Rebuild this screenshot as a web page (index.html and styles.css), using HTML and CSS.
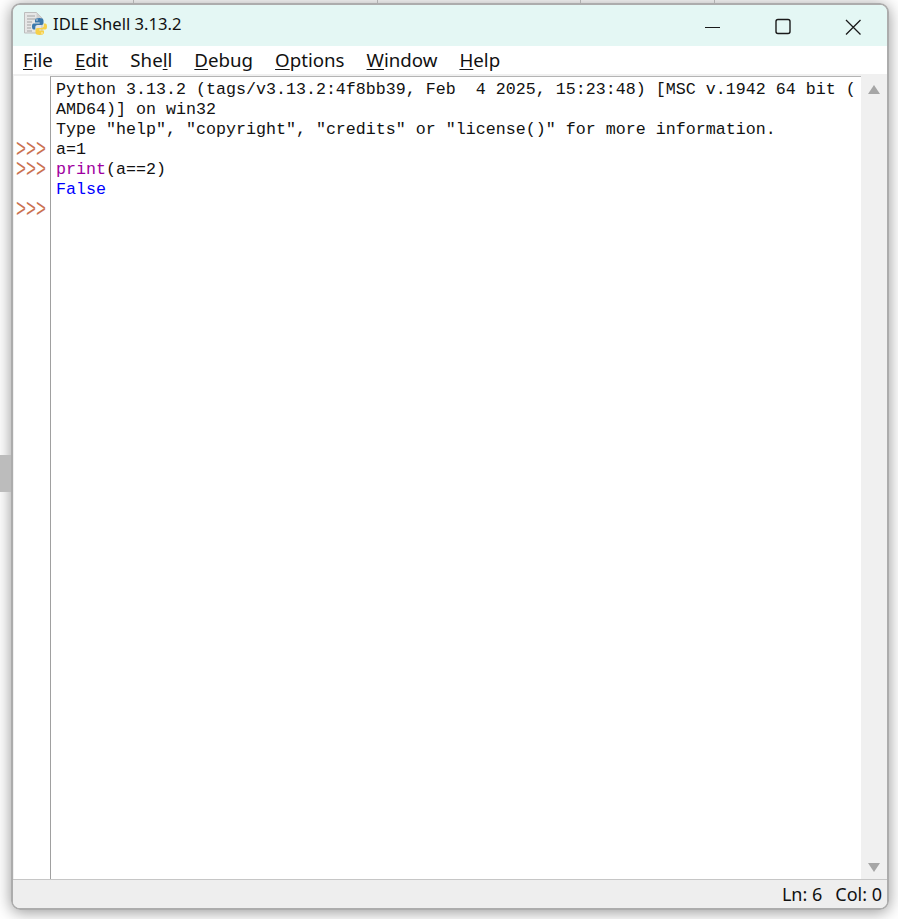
FILE: index.html
```html
<!DOCTYPE html>
<html lang="en">
<head>
<meta charset="utf-8">
<title>IDLE Shell 3.13.2</title>
<link rel="stylesheet" href="styles.css">
</head>
<body>
<div class="backdrop-block"></div>
<div class="backdrop-tick tick-a"></div>
<div class="backdrop-tick tick-b"></div>
<div class="backdrop-tick tick-c"></div>
<div class="backdrop-tick tick-d"></div>
<div class="window">
  <header class="titlebar">
    <svg class="app-icon" width="24" height="24" viewBox="0 0 24 24">
      <path d="M.5.500h12l5.500 5.500v15H.500z" fill="#e6e6e6" stroke="#bdbdbd"/>
      <path d="M3 4h8M3 7h9M3 10h5M3 13h4M3 16h4M3 19h5" stroke="#a4a4a4" stroke-width="1"/>
      <path d="M12.500.500l5.500 5.500h-5.500z" fill="#cfcfcf"/>
      <g>
        <path d="M15.500 6c-3 0-4.500.8-4.500 2.500v2h4.700v1H9.800C8.500 11.500 8 12.800 8 14.500s.6 3 1.800 3h1.500v-2.200c0-1.300 1-2.200 2.200-2.200h4c1.200 0 2-.9 2-2V8.500C19.500 6.800 18 6 15.500 6z" fill="#3b78ab"/>
        <circle cx="13" cy="8" r=".8" fill="#dbe8f2"/>
      </g>
      <g transform="rotate(180 15.500 14.500)">
        <path d="M15.500 6c-3 0-4.500.8-4.500 2.500v2h4.700v1H9.800C8.500 11.500 8 12.800 8 14.500s.6 3 1.800 3h1.500v-2.200c0-1.300 1-2.200 2.200-2.200h4c1.200 0 2-.9 2-2V8.500C19.500 6.800 18 6 15.500 6z" fill="#f6d04a"/>
        <circle cx="13" cy="8" r=".8" fill="#fff6d0"/>
      </g>
    </svg>
    <span class="title">IDLE Shell 3.13.2</span>
    <div class="controls">
      <svg class="control" width="70" height="41" viewBox="0 0 70 41"><path d="M27 23.500h15" stroke="#1a1a1a" stroke-width="1.200"/></svg>
      <svg class="control" width="70" height="41" viewBox="0 0 70 41"><rect x="28" y="15.500" width="14" height="14" rx="2" fill="none" stroke="#1a1a1a" stroke-width="1.400"/></svg>
      <svg class="control" width="70" height="41" viewBox="0 0 70 41"><path d="M28 16l14.500 14.500M42.500 16L28 30.500" stroke="#1a1a1a" stroke-width="1.300"/></svg>
    </div>
  </header>
  <nav class="menubar">
    <span class="menu-item"><u>F</u>ile</span>
    <span class="menu-item"><u>E</u>dit</span>
    <span class="menu-item">She<u>l</u>l</span>
    <span class="menu-item"><u>D</u>ebug</span>
    <span class="menu-item"><u>O</u>ptions</span>
    <span class="menu-item"><u>W</u>indow</span>
    <span class="menu-item"><u>H</u>elp</span>
  </nav>
  <main class="editor">
    <div class="gutter">
      <div class="line">&nbsp;</div>
      <div class="line">&nbsp;</div>
      <div class="line">&nbsp;</div>
      <div class="line prompt">&gt;&gt;&gt;</div>
      <div class="line prompt">&gt;&gt;&gt;</div>
      <div class="line">&nbsp;</div>
      <div class="line prompt">&gt;&gt;&gt;</div>
    </div>
    <div class="text">
      <div class="line">Python 3.13.2 (tags/v3.13.2:4f8bb39, Feb  4 2025, 15:23:48) [MSC v.1942 64 bit (</div>
      <div class="line">AMD64)] on win32</div>
      <div class="line">Type "help", "copyright", "credits" or "license()" for more information.</div>
      <div class="line">a=1</div>
      <div class="line"><span class="builtin">print</span>(a==2)</div>
      <div class="line output">False</div>
    </div>
    <div class="scrollbar">
      <svg width="12" height="9" viewBox="0 0 12 9"><path d="M6 0l6 9H0z" fill="#a6a6a6"/></svg>
      <svg width="12" height="9" viewBox="0 0 12 9"><path d="M0 0h12L6 9z" fill="#a6a6a6"/></svg>
    </div>
  </main>
  <footer class="statusbar">
    <span>Ln: 6</span>
    <span>Col: 0</span>
  </footer>
</div>
</body>
</html>
```

FILE: styles.css
```css
html, body {
  margin: 0;
  height: 100%;
  overflow: hidden;
  background: #fff;
}

body {
  padding: 3px 0 0 11px;
  box-sizing: border-box;
  position: relative;
}

.backdrop-block {
  position: absolute;
  left: 0;
  top: 455px;
  width: 11px;
  height: 37px;
  background: #bcbcbc;
}

.backdrop-tick {
  position: absolute;
  top: 0;
  width: 1px;
  height: 3px;
  background: #b0b0b0;
}

.tick-a { left: 133px; }
.tick-b { left: 377px; }
.tick-c { left: 580px; }
.tick-d { left: 714px; }

.window {
  position: relative;
  width: 878px;
  height: 907px;
  box-sizing: border-box;
  border: 2px solid #acacac;
  border-radius: 9px;
  overflow: hidden;
  display: flex;
  flex-direction: column;
  background: #fff;
}

body::before {
  content: "";
  position: absolute;
  left: 11px;
  top: 3px;
  width: 878px;
  height: 907px;
  border-radius: 9px;
  box-shadow: 0 2px 16px rgba(0, 0, 0, 0.42);
}

.titlebar {
  height: 41px;
  flex: none;
  background: #e4f7f4;
  display: flex;
  align-items: center;
  padding-left: 11px;
  font-family: "Noto Sans", "Open Sans", sans-serif;
}

.app-icon {
  flex: none;
  margin-bottom: 3px;
}

.title {
  margin-left: 5px;
  margin-bottom: 4px;
  font-size: 16.600px;
  color: #111;
}

.controls {
  margin-left: auto;
  display: flex;
  margin-right: -1px;
}

.control {
  display: block;
  margin-top: -2px;
}

.menubar {
  height: 28px;
  flex: none;
  display: flex;
  align-items: center;
  gap: 22px;
  padding: 0 0 2px 10px;
  box-sizing: border-box;
  background: #fff;
  font-family: "Noto Sans", "Open Sans", sans-serif;
  font-size: 18.700px;
  color: #111;
}

.menu-item u {
  text-underline-offset: 2px;
  text-decoration-thickness: 1px;
}

.editor {
  flex: 1;
  min-height: 0;
  display: flex;
  font-family: "Liberation Mono", monospace;
  font-size: 16.670px;
  line-height: 20px;
  color: #111;
  background: #f0f0f0;
  border-bottom: 1px solid #c6c6c6;
}

.line {
  height: 20px;
  flex: none;
  white-space: pre;
}

.gutter {
  width: 37px;
  flex: none;
  display: flex;
  flex-direction: column;
  padding: 5px 0 0 2px;
  box-sizing: border-box;
  background: #fff;
  margin-top: 2px;
  border-left: 1px solid #f0f0f0;
}

.prompt {
  height: 12px;
  margin: 4px 0;
  line-height: 12px;
  color: #cb7251;
  transform: scaleY(1.5);
}

.text {
  flex: 1;
  min-width: 0;
  padding: 3px 0 0 5px;
  background: #fff;
  margin-top: 2px;
  border-top: 1px solid #b4b4b4;
  border-left: 1px solid #a0a0a0;
  overflow: hidden;
}

.builtin {
  color: #a000a0;
}

.output {
  color: #0000ff;
}

.scrollbar {
  width: 26px;
  flex: none;
  display: flex;
  flex-direction: column;
  align-items: center;
  justify-content: space-between;
  padding: 11px 0 7px;
  box-sizing: border-box;
  background: #f0f0f0;
}

.statusbar {
  height: 28px;
  flex: none;
  display: flex;
  align-items: center;
  justify-content: flex-end;
  gap: 13px;
  padding-right: 5px;
  background: #eeeeee;
  font-family: "Noto Sans", "Open Sans", sans-serif;
  font-size: 18px;
  color: #111;
}
```
